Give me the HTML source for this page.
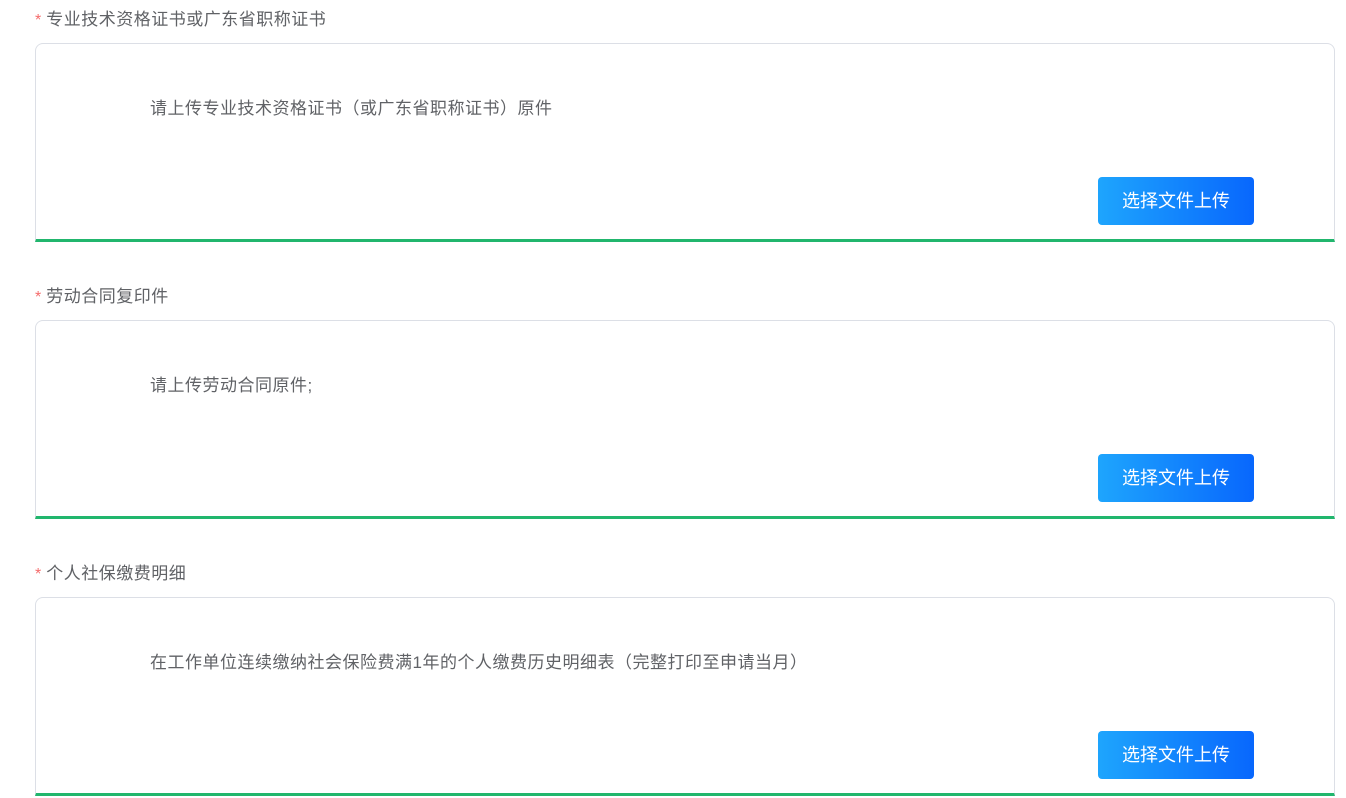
<!DOCTYPE html>
<html><head><meta charset="utf-8"><style>
*{margin:0;padding:0;box-sizing:border-box}
body{width:1346px;height:798px;background:#fff;font-family:"Liberation Sans","Noto Sans CJK SC",sans-serif;overflow:hidden;position:relative}
.sec{position:absolute;left:0;width:1346px}
.lbl{position:absolute;left:35px;top:10px;font-size:17px;color:#606266;line-height:20px;letter-spacing:0.5px}
.lbl b{color:#f56c6c;font-weight:normal;margin-right:5px;letter-spacing:0;font-size:16px}
.box{position:absolute;left:35px;top:43px;width:1300px;height:199px;border:1px solid #dcdfe6;border-bottom:3px solid #21b66d;border-radius:8px 8px 0 0}
.tip{position:absolute;left:114px;top:55px;font-size:17px;color:#606266;line-height:20px;letter-spacing:0.5px}
.btn{position:absolute;left:1062px;top:133px;width:156px;height:48px;border-radius:4px;background:linear-gradient(90deg,#1ea5fd,#0867fd);color:#fff;font-size:18px;line-height:48px;text-align:center}
</style></head><body>
<div class="sec" style="top:0"><div class="lbl"><b>*</b>专业技术资格证书或广东省职称证书</div><div class="box"><div class="tip">请上传专业技术资格证书（或广东省职称证书）原件</div><div class="btn">选择文件上传</div></div></div>
<div class="sec" style="top:277px"><div class="lbl"><b>*</b>劳动合同复印件</div><div class="box"><div class="tip">请上传劳动合同原件;</div><div class="btn">选择文件上传</div></div></div>
<div class="sec" style="top:554px"><div class="lbl"><b>*</b>个人社保缴费明细</div><div class="box"><div class="tip">在工作单位连续缴纳社会保险费满1年的个人缴费历史明细表（完整打印至申请当月）</div><div class="btn">选择文件上传</div></div></div>
</body></html>
